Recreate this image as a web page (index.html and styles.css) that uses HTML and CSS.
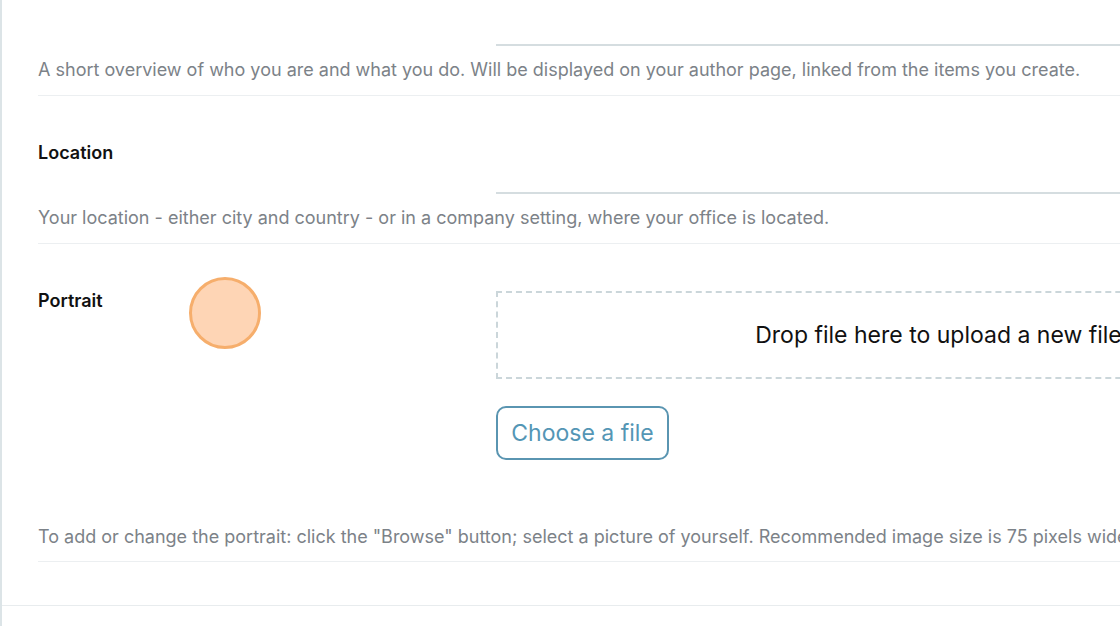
FILE: index.html
```html
<!DOCTYPE html>
<html lang="en">
<head>
<meta charset="utf-8">
<title>Personal information</title>
<link rel="stylesheet" href="styles.css">
</head>
<body>
<div class="page">
  <form class="form">
    <div class="row row-first">
      <div class="field-grid">
        <label class="label">Biography</label>
        <div class="field"><div class="textarea"></div></div>
      </div>
      <p class="help">A short overview of who you are and what you do. Will be displayed on your author page, linked from the items you create.</p>
    </div>
    <div class="row">
      <div class="field-grid">
        <label class="label">Location</label>
        <div class="field"><div class="input"></div></div>
      </div>
      <p class="help">Your location - either city and country - or in a company setting, where your office is located.</p>
    </div>
    <div class="row row-portrait">
      <div class="field-grid">
        <label class="label">Portrait</label>
        <div class="field field-upload">
          <div class="dropzone">Drop file here to upload a new file</div>
          <button type="button" class="btn">Choose a file</button>
        </div>
      </div>
      <p class="help help-portrait">To add or change the portrait: click the "Browse" button; select a picture of yourself. Recommended image size is 75 pixels wide by 100 pixels tall.</p>
    </div>
    <div class="footer"></div>
  </form>
  <div class="click-dot"></div>
</div>
</body>
</html>
```

FILE: styles.css
```css
* { box-sizing: border-box; }
html, body {
  margin: 0;
  padding: 0;
  background: #ffffff;
  overflow: hidden;
  width: 1120px;
  height: 626px;
}
body {
  font-family: Inter, "Noto Sans", "Liberation Sans", sans-serif;
  color: #111;
}
.page {
  position: relative;
  border-left: 2px solid #dce4e7;
  height: 800px;
  margin-top: -117px;
}
.form {
  padding-left: 36px;
  width: 1500px;
}
.row {
  padding-top: 43px;
  padding-bottom: 12px;
  border-bottom: 1px solid #eceff1;
}
.row-portrait {
  padding-bottom: 11px;
}
.field-grid {
  display: grid;
  grid-template-columns: 458px 1fr;
}
.label {
  padding-top: 1px;
  font-size: 18px;
  font-weight: 600;
  line-height: 26px;
  color: #111;
}
.textarea {
  height: 120px;
  border-bottom: 2px solid #d5dde0;
}
.input {
  height: 55px;
  border-bottom: 2px solid #d5dde0;
}
.help {
  margin: 11px 0 0;
  font-size: 18px;
  line-height: 26px;
  color: #7c8288;
  white-space: nowrap;
}
.field-upload {
  padding-top: 4px;
  display: flex;
  flex-direction: column;
  align-items: flex-start;
}
.dropzone {
  width: 885px;
  height: 88px;
  border: 2px dashed #cbd6da;
  display: flex;
  align-items: center;
  justify-content: center;
  font-size: 23px;
  color: #111;
}
.btn {
  margin-top: 27px;
  height: 54px;
  width: 173px;
  border: 2.5px solid #5a95b1;
  border-radius: 10px;
  background: #fff;
  color: #5496b5;
  font-family: inherit;
  font-size: 23px;
  padding: 0;
}
.help-portrait {
  margin-top: 64px;
}
.footer {
  height: 44px;
  border-bottom: 1px solid #e8ecee;
  margin-left: -36px;
}
.click-dot {
  position: absolute;
  left: 187px;
  top: 394px;
  width: 72px;
  height: 72px;
  border-radius: 50%;
  background: #fed5b5;
  border: 3px solid #f6ae6c;
}
```
